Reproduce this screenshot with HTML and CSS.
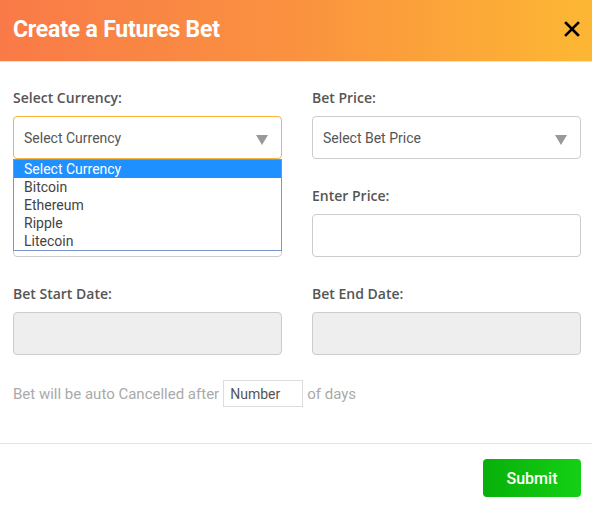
FILE: index.html
```html
<!DOCTYPE html>
<html>
<head>
<meta charset="utf-8">
<link rel="stylesheet" href="styles.css">
</head>
<body>
<div class="modal">
  <div class="header">
    <h1 class="title">Create a Futures Bet</h1>
    <span class="close">
      <svg width="16" height="16" viewBox="0 0 16 16"><path d="M2 2 L14 14 M14 2 L2 14" stroke="#000" stroke-width="2.6" stroke-linecap="square"/></svg>
    </span>
  </div>
  <div class="content">
    <div class="grid">
      <div class="field">
        <label class="label">Select Currency:</label>
        <div class="select-wrap">
          <div class="control select focused">Select Currency<span class="arrow"></span></div>
          <ul class="dropdown">
            <li class="opt active">Select Currency</li>
            <li class="opt">Bitcoin</li>
            <li class="opt">Ethereum</li>
            <li class="opt">Ripple</li>
            <li class="opt">Litecoin</li>
          </ul>
        </div>
      </div>
      <div class="field">
        <label class="label">Bet Price:</label>
        <div class="control select">Select Bet Price<span class="arrow"></span></div>
      </div>
      <div class="field">
        <label class="label">&nbsp;</label>
        <div class="control"></div>
      </div>
      <div class="field">
        <label class="label">Enter Price:</label>
        <div class="control"></div>
      </div>
      <div class="field">
        <label class="label">Bet Start Date:</label>
        <div class="control disabled"></div>
      </div>
      <div class="field">
        <label class="label">Bet End Date:</label>
        <div class="control disabled"></div>
      </div>
    </div>
    <div class="cancel-row">
      <span>Bet will be auto Cancelled after</span>
      <span class="num">Number</span>
      <span>of days</span>
    </div>
  </div>
  <div class="footer">
    <button class="submit">Submit</button>
  </div>
</div>
</body>
</html>
```
FILE: styles.css
```css
* { box-sizing: border-box; }
html, body { margin: 0; padding: 0; background: #fff; }
body { font-family: Roboto, "Noto Sans", sans-serif; width: 592px; height: 512px; overflow: hidden; }
.modal { width: 592px; }
.header {
  height: 62px;
  background: linear-gradient(90deg, #f97a48 0%, #fa9240 50%, #fdb733 100%);
  border-bottom: 1px solid #e6e6e6;
  display: flex; align-items: center; justify-content: space-between;
  padding: 0 12px 0 13px;
}
.title { margin: 0; font-family: Roboto, sans-serif; font-weight: 700; font-size: 23px; color: #fff; letter-spacing: -0.2px; padding-bottom: 2px; }
.close { display: flex; width: 16px; height: 16px; margin-bottom: 3px; }
.content { padding: 26px 11px 0 13px; }
.grid { display: grid; grid-template-columns: 269px 269px; column-gap: 30px; row-gap: 27px; }
.field { display: flex; flex-direction: column; }
.label { font-family: "Open Sans", sans-serif; font-weight: 600; font-size: 14px; line-height: 20px; color: #555; margin-bottom: 8px; }
.select-wrap { position: relative; }
.control {
  height: 43px; border: 1px solid #ccc; border-radius: 4px; background: #fff;
  font-size: 14px; color: #555; display: flex; align-items: center; padding: 0 10px;
  position: relative;
}
.focused { border-color: #fbb23a; }
.disabled { background: #eee; }
.arrow {
  position: absolute; right: 13px; top: 18px;
  width: 0; height: 0;
  border-left: 6px solid transparent; border-right: 6px solid transparent; border-top: 10px solid #999;
}
.dropdown {
  position: absolute; left: 0; top: 43px; width: 269px; height: 92px;
  margin: 0; padding: 0; list-style: none; background: #fff;
  border: 1px solid #7a95c8; z-index: 5;
}
.opt { height: 18px; line-height: 18px; font-size: 14px; color: #444; padding-left: 10px; }
.opt.active { background: #1e90ff; color: #fff; }
.cancel-row { display: flex; align-items: center; margin-top: 25px; font-size: 15px; color: #aaa; }
.num {
  width: 80px; height: 27px; border: 1px solid #ddd; color: #555; font-size: 14px;
  display: flex; align-items: center; padding-left: 6px; margin: 0 4px 0 4px;
}
.footer { margin-top: 36px; border-top: 1px solid #e5e5e5; padding: 15px 11px 0 0; display: flex; justify-content: flex-end; }
.submit {
  width: 98px; height: 38px; border: none; border-radius: 4px;
  background: linear-gradient(90deg, #08b00a, #14d014);
  color: #fff; font-family: Roboto, sans-serif; font-weight: 500; font-size: 16px; cursor: pointer;
}
```
